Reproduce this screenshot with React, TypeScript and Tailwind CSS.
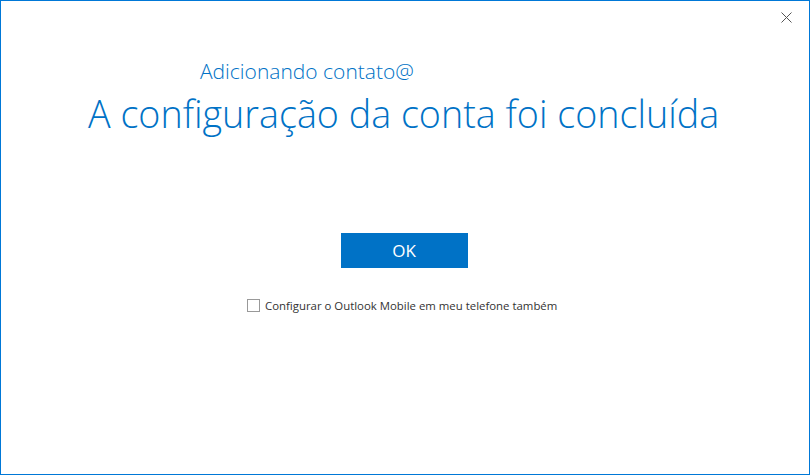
import React, { useState } from 'react';

export default function App() {
  const [mobile, setMobile] = useState(false);

  return (
    <div className="w-[810px] h-[475px] bg-white border border-[#0078d7] flex flex-col font-['Open_Sans',_'Noto_Sans',_sans-serif] overflow-hidden">
      <div className="flex justify-end h-[32px]">
        <button className="w-[46px] h-[32px] flex items-center justify-center text-[#555]">
          <svg width="11" height="11" viewBox="0 0 11 11" fill="none" stroke="currentColor" strokeWidth="1">
            <path d="M0.5 0.5 L10.5 10.5 M10.5 0.5 L0.5 10.5" />
          </svg>
        </button>
      </div>

      <div className="pl-[199px] mt-[25px] text-[21px] leading-[26px] text-[#0072c6] font-light">
        Adicionando contato@
      </div>
      <h1 className="pl-[87px] mt-[7px] text-[37.7px] leading-[46px] text-[#0072c6] font-light">
        A configuração da conta foi concluída
      </h1>

      <div className="flex justify-center mt-[96px]">
        <button className="w-[127px] h-[35px] bg-[#0072c6] text-white text-[17px] ml-[-2px]">OK</button>
      </div>

      <label className="flex items-center gap-[5px] mt-[29px] ml-[246px] text-[11.4px] text-[#333] cursor-pointer">
        <span className="w-[13px] h-[13px] border border-[#999] bg-white flex items-center justify-center">
          {mobile && <span className="w-[7px] h-[7px] bg-[#333]" />}
        </span>
        <input type="checkbox" className="hidden" checked={mobile} onChange={() => setMobile(!mobile)} />
        Configurar o Outlook Mobile em meu telefone também
      </label>
    </div>
  );
}
